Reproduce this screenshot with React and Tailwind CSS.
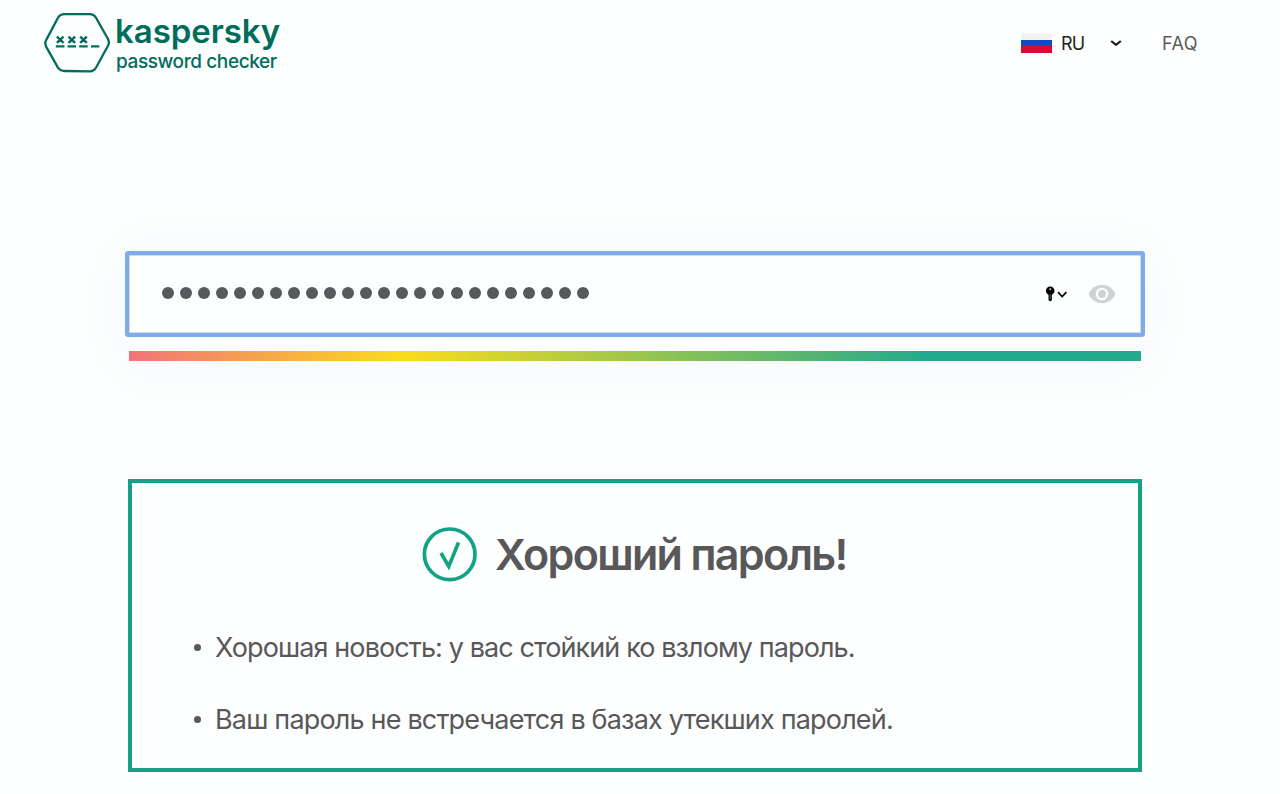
import { useState } from 'react';

const messages = [
  { text: 'Хорошая новость: у вас стойкий ко взлому пароль.', style: 'tracking-[-0.9px]' },
  { text: 'Ваш пароль не встречается в базах утекших паролей.', style: 'tracking-[-0.82px]' },
];

const Logo = () => (
  <a className="flex" aria-label="kaspersky password checker">
    <svg width="68" height="62" viewBox="0 0 68 62" fill="none" stroke="#006d5c" className="shrink-0">
      <path
        d="M21.500 2.200H46.500c3.200 0 5 1 6.500 3.600L65 27c1.200 2.400 1.200 4.400 0 6.800L53.400 55c-1.700 3-3.400 4.400-6.600 4.400L21.400 59c-3.200 0-4.900-1-6.600-3.600L3.100 34.600c-1.200-2.400-1.200-4.600.300-7L14.700 6.200c1.700-3 3.600-4 6.800-4z"
        strokeWidth="2.300"
      />
      <path d="M13.900 24.700l6.600 6.200m0-6.200l-6.600 6.200M25.500 24.700l6.600 6.200m0-6.200l-6.600 6.200M37.200 24.700l6.600 6.200m0-6.200l-6.600 6.200" strokeWidth="2.400" />
      <path d="M12.800 34.300h8.700M24.500 34.300h8.500M36.200 34.300h8.500M48 34.300h8.300" strokeWidth="2.200" />
    </svg>
    <div className="ml-1 flex flex-col pt-px text-[#006d5c]">
      <span className="h-9 text-[33px] leading-9 font-semibold tracking-[-0.050px]">kaspersky</span>
      <span className="mt-px ml-px text-[19px] leading-6 font-medium tracking-[-0.4px] whitespace-nowrap">password checker</span>
    </div>
  </a>
);

const Header = () => (
  <header className="flex h-[86px] items-start justify-between pt-3 pr-[82px] pl-[43px]">
    <Logo />
    <nav className="mt-[17px] flex h-7 items-center text-lg">
      <div className="h-5 w-[31px]">
        <div className="h-1/3 bg-[#f3f3f3]"></div>
        <div className="h-1/3 bg-[#0b50b8]"></div>
        <div className="h-1/3 bg-[#d80b36]"></div>
      </div>
      <span className="mt-px ml-[9px] w-[25px] tracking-[-0.8px] text-[#222]">RU</span>
      <svg width="12" height="8" viewBox="0 0 12 8" fill="none" stroke="#1d1d1b" strokeWidth="2.200" className="ml-6">
        <path d="M1.200 2L6 5.800l4.800-3.800" />
      </svg>
      <a className="mt-px ml-10 w-9 tracking-[0.5px] text-[#5a5a5c]">FAQ</a>
    </nav>
  </header>
);

const PasswordField = () => {
  const [length] = useState(24);

  return (
    <div className="mt-[169px] mr-[139px] ml-[129px] shadow-[0_0_60px_rgba(90,90,190,0.045)]">
      <div className="flex h-[78px] items-center rounded-[1px] border border-[#d3d9e6] bg-[#fdfefe] pr-6 pl-8 ring-4 ring-[#7eabed]">
        <div className="mb-0.5 flex gap-[6.040px]">
          {Array.from({ length }, (_, i) => (
            <span key={i} className="size-3 rounded-full bg-[#58595c]"></span>
          ))}
        </div>
        <svg width="24" height="18" viewBox="0 0 24 18" className="ml-auto">
          <circle cx="5.200" cy="5.800" r="4.300" />
          <path d="M3.500 8.500h3.400V15l-1.700 1.500L3.500 15z" />
          <circle cx="5.200" cy="4.100" r="0.900" fill="#fff" />
          <path d="M5.200 9.500V14" stroke="#aaa" strokeWidth="0.600" />
          <path d="M13 7.200l4.200 4.300 4.200-4.300" fill="none" stroke="#000" strokeWidth="1.700" />
        </svg>
        <svg width="28" height="20" viewBox="0 0 28 20" className="ml-[19px]">
          <path d="M.5 10C3.200 4.200 8 .8 14 .8S24.800 4.200 27.500 10C24.800 15.800 20 19.200 14 19.200S3.200 15.800.5 10z" fill="#d0d1d5" />
          <circle cx="14" cy="10" r="6.300" fill="#fdfefe" />
          <circle cx="14" cy="10" r="3.900" fill="#d0d1d5" />
        </svg>
      </div>
      <div className="pt-[18px]">
        <div className="h-2.5 bg-[linear-gradient(90deg,#f1727a_0%,#fbdc1c_27%,#23a98c_79%,#23a98c_100%)]"></div>
      </div>
    </div>
  );
};

const Result = () => (
  <section className="mt-[118px] mr-[138px] ml-32 h-[293px] border-4 border-[#16a187] text-[#58585b]">
    <div className="mt-[42px] ml-[289px] flex h-[58px] items-center">
      <svg width="58" height="58" viewBox="0 0 58 58" fill="none" stroke="#10a386" className="shrink-0">
        <circle cx="28.700" cy="29.300" r="25.300" strokeWidth="3.700" />
        <path d="M20 28l7.800 13.500L37.500 17.500" strokeWidth="3.600" />
      </svg>
      <h1 className="ml-4 text-[43px] leading-[58px] font-semibold tracking-[-1.680px] whitespace-nowrap">Хороший пароль!</h1>
    </div>
    <ul className="mt-11 ml-[62px] flex flex-col gap-8 text-[27px] leading-10">
      {messages.map((message) => (
        <li key={message.text} className="flex h-10 items-center whitespace-nowrap">
          <span className="mr-3.5 size-[7px] rounded-full bg-[#58585b]"></span>
          <span className={message.style + ' pt-0.5'}>{message.text}</span>
        </li>
      ))}
    </ul>
  </section>
);

function App() {
  return (
    <div className="h-[794px] w-[1280px] overflow-hidden bg-[#fdfefe] font-['Inter',sans-serif]">
      <Header />
      <main>
        <PasswordField />
        <Result />
      </main>
    </div>
  );
}

export default App;
